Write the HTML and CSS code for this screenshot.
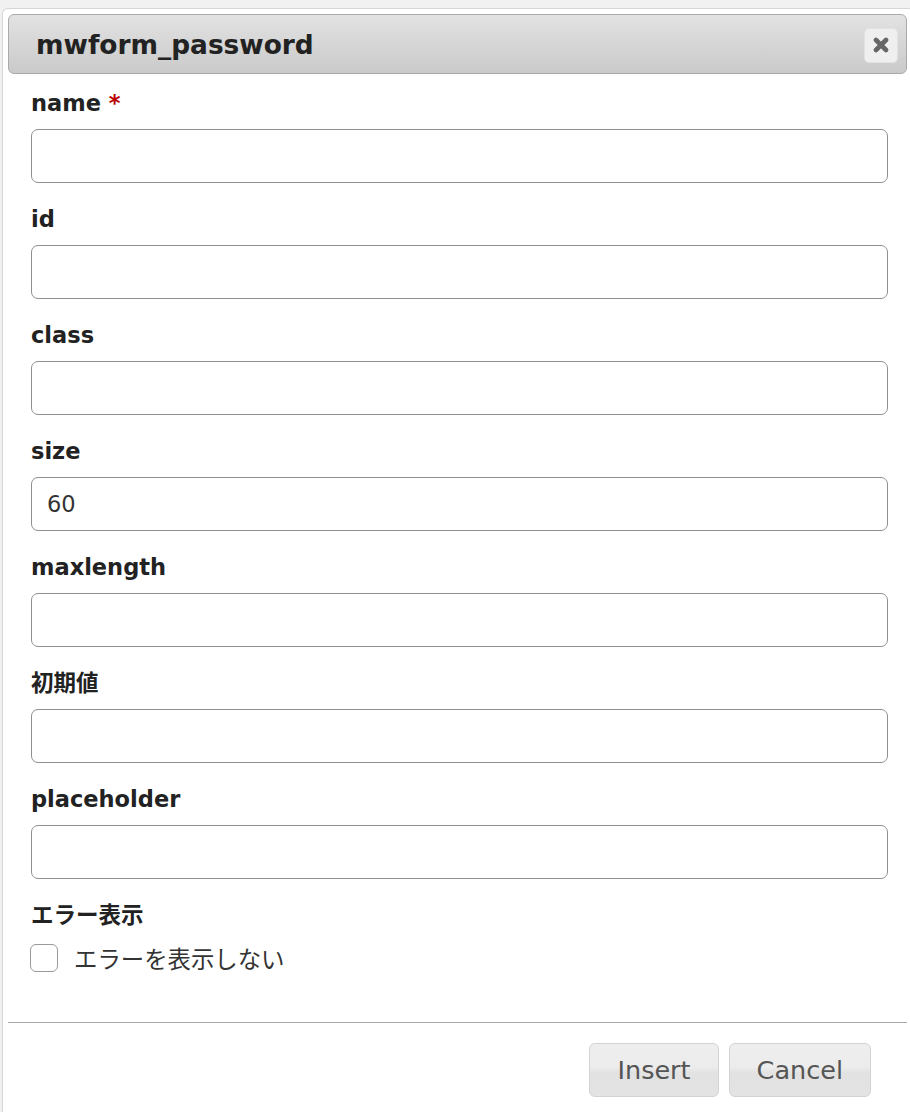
FILE: index.html
```html
<!DOCTYPE html>
<html lang="ja">
<head>
  <meta charset="UTF-8">
  <title>mwform_password</title>
  <link rel="stylesheet" href="styles.css">
</head>
<body>

  <!-- Dialog -->
  <div class="dialog">
    <div class="titlebar">
      <span class="title">mwform_password</span>
      <button class="close" title="Close">
        <svg width="16" height="16" viewBox="0 0 16 16">
          <path d="M3 3 L13 13 M13 3 L3 13" stroke="#666" stroke-width="4.6" stroke-linecap="round"/>
        </svg>
      </button>
    </div>

    <div class="content">
      <div class="field">
        <label>name <span class="req">*</span></label>
        <input type="text">
      </div>
      <div class="field">
        <label>id</label>
        <input type="text">
      </div>
      <div class="field">
        <label>class</label>
        <input type="text">
      </div>
      <div class="field">
        <label>size</label>
        <input type="text" value="60">
      </div>
      <div class="field">
        <label>maxlength</label>
        <input type="text">
      </div>
      <div class="field">
        <label>初期値</label>
        <input type="text">
      </div>
      <div class="field">
        <label>placeholder</label>
        <input type="text">
      </div>
      <div class="field">
        <label>エラー表示</label>
        <div class="check-row">
          <input type="checkbox" id="noerror">
          <span>エラーを表示しない</span>
        </div>
      </div>
    </div>

    <div class="buttonpane">
      <button class="btn">Insert</button>
      <button class="btn">Cancel</button>
    </div>
  </div>

</body>
</html>
```

FILE: styles.css
```css
body {
  margin: 0;
  font-family: "DejaVu Sans", "Noto Sans CJK JP", sans-serif;
  background: #f1f1f1;
  overflow: hidden;
  height: 1112px;
}

.dialog {
  box-sizing: border-box;
  margin: 8px 0 0 2px;
  width: 911px;
  height: 1104px;
  padding: 5px 5px 0 5px;
  background: #fff;
  border: 1px solid #d6d6d6;
  border-bottom: none;
  border-radius: 6px 0 0 0;
  overflow: hidden;
}

.titlebar {
  display: flex;
  justify-content: space-between;
  align-items: center;
  height: 58px;
  border: 1px solid #aaa;
  border-radius: 6px;
  background: linear-gradient(to bottom, #e2e2e2, #cacaca);
  padding: 0 8px 0 27px;
}

.title {
  font-size: 26.4px;
  font-weight: bold;
  color: #222;
}

.close {
  width: 34px;
  height: 35px;
  padding: 0;
  border: 1px solid #e2e2e2;
  border-radius: 5px;
  background: #efefef;
  display: flex;
  align-items: center;
  justify-content: center;
  margin-top: 2px;
}

.content {
  padding: 13px 20px 27px 23px;
}

.field {
  margin-bottom: 20px;
}

.field label {
  display: block;
  font-size: 22.5px;
  font-weight: bold;
  line-height: 32px;
  color: #222;
  margin-bottom: 10px;
}

.req {
  color: #b00;
}

.field input[type="text"] {
  display: block;
  box-sizing: border-box;
  width: 857px;
  height: 54px;
  margin: 0;
  padding: 0 15px;
  border: 1px solid #8f8f8f;
  border-radius: 7px;
  font-family: inherit;
  font-size: 22.5px;
  color: #333;
  background: #fff;
}

.check-row {
  display: flex;
  align-items: center;
  gap: 16px;
  margin-top: 5px;
  margin-left: -1px;
  font-size: 23.4px;
  color: #333;
}

.check-row input {
  appearance: none;
  -webkit-appearance: none;
  box-sizing: border-box;
  width: 28px;
  height: 28px;
  margin: 0;
  border: 1px solid #999;
  border-radius: 6px;
  background: #fff;
}

.buttonpane {
  border-top: 1px solid #aaa;
  display: flex;
  justify-content: flex-end;
  gap: 10px;
  padding: 20px 36px 0 0;
}

.btn {
  height: 54px;
  padding: 0 27px;
  border: 1px solid #d3d3d3;
  border-radius: 6px;
  background: linear-gradient(to bottom, #eeeeee 0%, #ececec 45%, #e2e2e2 55%, #e3e3e3 100%);
  font-family: inherit;
  font-size: 25.5px;
  color: #555;
}
```
